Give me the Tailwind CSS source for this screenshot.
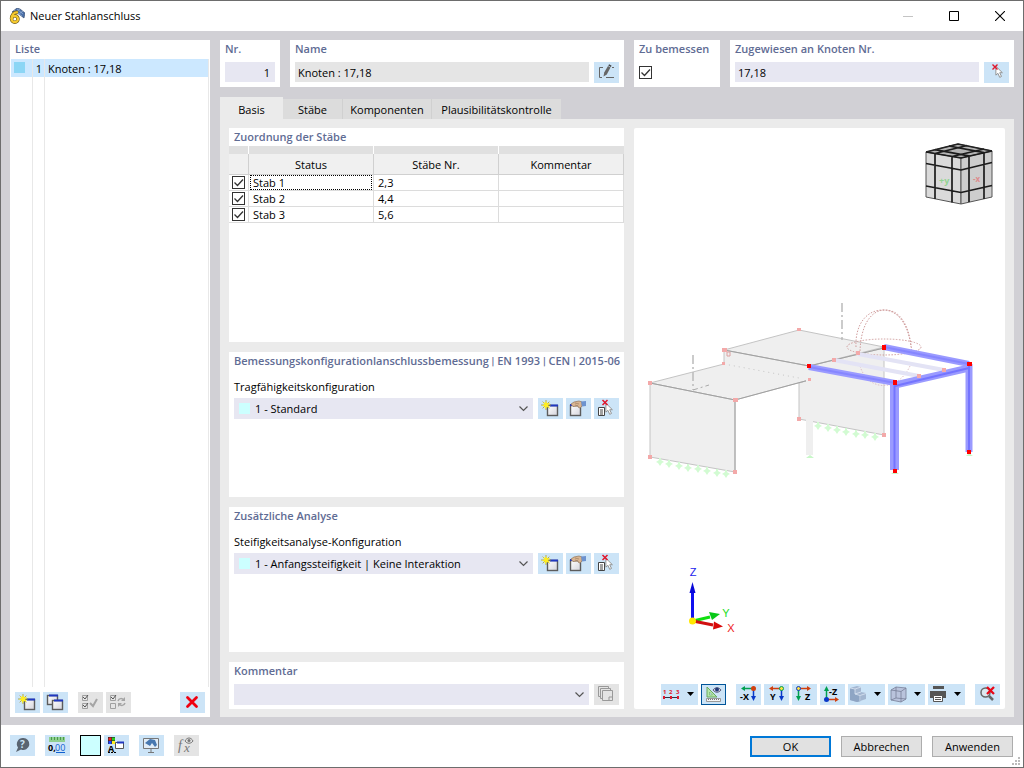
<!DOCTYPE html>
<html lang="de">
<head>
  <meta charset="UTF-8" />
  <meta name="viewport" content="width=device-width, initial-scale=1.0"/>
  <title>Neuer Stahlanschluss</title>
  <script src="https://cdn.jsdelivr.net/npm/@tailwindcss/browser@4"></script>
</head>
<body class="font-['Open_Sans','Noto_Sans',sans-serif] text-[11px] leading-4 text-black">

  <!-- shared icons -->
  <svg class="absolute size-0">
    <defs>
      <linearGradient id="win" x1="0" y1="0" x2="1" y2="1"><stop offset="0" stop-color="#fff"/><stop offset="1" stop-color="#d4d4dc"/></linearGradient>
      <symbol id="i-star" viewBox="0 0 12 12">
        <path d="M6 0v12M0 6h12M2 2l8 8M10 2l-8 8" stroke="#a89c30" stroke-width="1"/>
        <path d="M6 1l1.300 3L11 3.500 8.500 6l2 3.500L7 8.300 5 11l-.7-3.300L1 7l3-1.500L2.500 2.500l2.600 1z" fill="#ffee20"/>
      </symbol>
      <symbol id="i-new" viewBox="0 0 25 21">
        <rect x="9.500" y="7.500" width="10" height="10" fill="url(#win)" stroke="#5c5c5c" stroke-width="1.400"/>
        <path d="M12 7.500h8" stroke="#2038c0" stroke-width="2"/>
        <use href="#i-star" x="3" y="2" width="10" height="10"/>
      </symbol>
      <symbol id="i-edit" viewBox="0 0 25 21">
        <rect x="4.500" y="7.500" width="10" height="10" fill="url(#win)" stroke="#5c5c5c" stroke-width="1.400"/>
        <path d="M4 7h5" stroke="#2038c0" stroke-width="2"/>
        <path d="M5 6l3-2 5-1 3 1v4l-2 2-1.500-.5L12 8l-5 .5-1-1z" fill="#d9b591" stroke="#94755a" stroke-width=".7"/>
        <path d="M9 5l4 1M9 7l3 1" stroke="#94755a" stroke-width=".6"/>
        <path d="M15 3.500l5-.5v5l-4 .5z" fill="#6d93cf"/>
      </symbol>
      <symbol id="i-arrow" viewBox="0 0 9 15">
        <path d="M1 1v10l2.300-2 2 4.500 2-1-2-4.200h3z" fill="#fff" stroke="#8a8a8a"/>
      </symbol>
      <symbol id="i-pick" viewBox="0 0 25 21">
        <path d="M4.500 9.500h6v8h-6z" fill="#fff" stroke="#444"/><path d="M6 12h3M6 14h3M6 16h3" stroke="#444"/>
        <use href="#i-arrow" x="11" y="4" width="8" height="14"/>
        <path d="M8.500 2l5 5M13.500 2l-5 5" stroke="#e0182d" stroke-width="1.500"/>
      </symbol>
      <symbol id="i-check" viewBox="0 0 13 13">
        <path d="M2.500 6.500l3 3 5.500-6" fill="none" stroke="#333" stroke-width="1.300"/>
      </symbol>
      <symbol id="i-chev" viewBox="0 0 9 6">
        <path d="M.5 .5l4 4 4-4" fill="none" stroke="#555" stroke-width="1.200"/>
      </symbol>
      <symbol id="i-support" viewBox="0 0 8 8">
        <path d="M3 0h2v2l3 2-2 1-2 3-2-3-2-1 3-2z" fill="#d2fbd2"/>
      </symbol>
    </defs>
  </svg>

  <div class="min-h-screen flex flex-col border border-[#6d6d6d] bg-white">

    <!-- title bar -->
    <header class="h-[30px] flex items-center pl-2">
      <svg class="size-4" viewBox="0 0 16 16">
        <path d="M3 4l5-4 3 1 5 4-1 5-4-3-4-3z" fill="#4a6fa8" stroke="#2f4468" stroke-width=".6"/>
        <path d="M5 2l8 6M8 1l6 5M7 4l4-3M10 6l4-3" stroke="#a9c1e2" stroke-width=".6"/>
        <path d="M9 4.500C5 3.500 2.500 7 2.500 11" fill="none" stroke="#6c5a1a" stroke-width="3.400"/>
        <circle cx="5.800" cy="11" r="3.200" fill="none" stroke="#6c5a1a" stroke-width="3.400"/>
        <path d="M9 4.500C5 3.500 2.500 7 2.500 11" fill="none" stroke="#f5c92e" stroke-width="2.200"/>
        <circle cx="5.800" cy="11" r="3.200" fill="none" stroke="#f5c92e" stroke-width="2.200"/>
      </svg>
      <h1 class="ml-[5px] grow">Neuer Stahlanschluss</h1>
      <button class="w-[46px] h-full grid place-items-center" aria-label="Minimieren"><svg class="size-[10px]" viewBox="0 0 10 10"><path d="M0 5.500h10" stroke="#c4c4c4"/></svg></button>
      <button class="w-[46px] h-full grid place-items-center" aria-label="Maximieren"><svg class="size-[10px]" viewBox="0 0 10 10"><path d="M.5 .5h9v9h-9z" fill="none" stroke="#000"/></svg></button>
      <button class="w-[46px] h-full grid place-items-center" aria-label="Schließen"><svg class="size-[10px]" viewBox="0 0 10 10"><path d="M0 0l10 10M10 0L0 10" stroke="#000" stroke-width="1.100"/></svg></button>
    </header>

    <main class="grow flex gap-[10px] bg-[#d1d0d5] px-[9px] pt-[9px] pb-2">

      <!-- list -->
      <aside class="w-[200px] shrink-0 bg-white flex flex-col">
        <h2 class="h-[18px] leading-[18px] px-[5px] font-semibold text-[#5f6c94]">Liste</h2>
        <div class="grow mt-px ml-px mr-px grid grid-cols-[22px_12px_1fr]">
          <div class="border-r border-[#e8e8e8]"><div class="h-[18px] bg-[#cce8ff] p-[3px]"><div class="size-[11px] bg-[#8cd6f5]"></div></div></div>
          <div class="border-r border-[#e8e8e8]"><div class="h-[18px] leading-[19px] bg-[#cce8ff] text-right pr-[2px]">1</div></div>
          <div class="border-r border-[#e8e8e8]"><div class="h-[18px] leading-[19px] bg-[#cce8ff] pl-[3px]">Knoten : 17,18</div></div>
        </div>
        <div class="flex gap-[3px] px-[5px] pt-[5px] pb-1">
          <button class="w-[25px] h-[21px] bg-[#cce4f7]" aria-label="Neu"><svg viewBox="0 0 25 21"><use href="#i-new"/></svg></button>
          <button class="w-[25px] h-[21px] bg-[#cce4f7]" aria-label="Kopieren"><svg viewBox="0 0 25 21">
            <rect x="4.500" y="3.500" width="10" height="9" fill="url(#win)" stroke="#5c5c5c" stroke-width="1.400"/><path d="M6 3.500h9" stroke="#2038c0" stroke-width="2"/>
            <rect x="9.500" y="8.500" width="10" height="9" fill="url(#win)" stroke="#5c5c5c" stroke-width="1.400"/><path d="M11 8.500h9" stroke="#2038c0" stroke-width="2"/></svg></button>
          <button class="w-[25px] h-[21px] bg-[#e4e4e4] ml-[7px]" aria-label="Alle auswählen"><svg viewBox="0 0 25 21" fill="none">
            <path d="M4.500 3.500h5v5h-5zM4.500 11.500h5v5h-5z" stroke="#a0a0a0"/><path d="M5 5l2 2 3-4M5 13l2 2 3-4" stroke="#555"/><path d="M12 11l3 3 4-7" stroke="#a5a5a5" stroke-width="2"/></svg></button>
          <button class="w-[25px] h-[21px] bg-[#e4e4e4]" aria-label="Auswahl umkehren"><svg viewBox="0 0 25 21" fill="none">
            <path d="M4.500 3.500h5v5h-5zM4.500 11.500h5v5h-5z" stroke="#a0a0a0"/><path d="M5 5l2 2 3-4" stroke="#555"/><path d="M12 9c1-3 4-3 6-1M19 11c-1 3-4 3-6 1" stroke="#a5a5a5" stroke-width="1.500"/><path d="M19 5v4h-4zM12 15v-4h4z" fill="#a5a5a5"/></svg></button>
          <button class="w-[25px] h-[21px] bg-[#cce4f7] ml-auto" aria-label="Löschen"><svg viewBox="0 0 25 21"><path d="M7.500 5.500l9 9M16.500 5.500l-9 9" stroke="#f00010" stroke-width="2.800" stroke-linecap="round"/></svg></button>
        </div>
      </aside>

      <div class="grow min-w-0 flex flex-col">

        <!-- header fields -->
        <div class="grid grid-cols-[60px_334fr_86px_284fr] gap-[10px]">
          <section class="bg-white px-[5px] pb-1">
            <label for="nr" class="block h-[18px] leading-[18px] font-semibold text-[#5f6c94]">Nr.</label>
            <div class="mt-1 h-[21px]"><input id="nr" value="1" class="w-full h-5 bg-[#e7e7f2] text-right px-[5px] pt-px" /></div>
          </section>
          <section class="bg-white px-[5px] pb-1">
            <label for="name" class="block h-[18px] leading-[18px] font-semibold text-[#5f6c94]">Name</label>
            <div class="mt-1 flex gap-[5px]">
              <input id="name" value="Knoten : 17,18" readonly class="grow min-w-0 h-5 bg-[#e5e5e5] px-[3px] pt-px" />
              <button class="w-[25px] h-[21px] bg-[#cce4f7]" aria-label="Name bearbeiten"><svg viewBox="0 0 25 21" fill="none">
                <path d="M9 5.500H5.500v10H8M12 15.500h8M18 5.500h2" stroke="#666"/><path d="M9.500 14.500l.7-4L14 4l2.500 1.500-3.700 7z" fill="#666"/><path d="M14.300 3.500l.8-1.300 2.500 1.500-.8 1.300z" fill="#444"/></svg></button>
            </div>
          </section>
          <section class="bg-white px-[5px] pb-1">
            <label for="design" class="block h-[18px] leading-[18px] font-semibold text-[#5f6c94] whitespace-nowrap">Zu bemessen</label>
            <div class="mt-1 h-[21px] grid justify-start items-center">
              <input id="design" type="checkbox" checked class="appearance-none size-[13px] border border-[#333] bg-white [grid-area:1/1]" />
              <svg class="size-[13px] [grid-area:1/1] pointer-events-none"><use href="#i-check"/></svg>
            </div>
          </section>
          <section class="bg-white px-[5px] pb-1">
            <label for="nodes" class="block h-[18px] leading-[18px] font-semibold text-[#5f6c94]">Zugewiesen an Knoten Nr.</label>
            <div class="mt-1 flex gap-[5px]">
              <input id="nodes" value="17,18" class="grow min-w-0 h-5 bg-[#e7e7f2] px-[3px] pt-px" />
              <button class="w-[25px] h-[21px] bg-[#cce4f7]" aria-label="Knoten auswählen"><svg viewBox="0 0 25 21">
                <use href="#i-arrow" x="11" y="3" width="8" height="14"/><path d="M8.500 2.500l5 5M13.500 2.500l-5 5" stroke="#e0182d" stroke-width="1.400"/></svg></button>
            </div>
          </section>
        </div>

        <!-- tabs -->
        <nav class="mt-[10px] h-[22px] flex items-end" role="tablist">
          <button role="tab" aria-selected="true" class="w-[63px] h-[22px] pt-1 bg-[#ebebeb]">Basis</button>
          <button role="tab" class="w-[60px] h-5 pt-px bg-[#dcdcdc] border-r border-[#d0d0d0]">Stäbe</button>
          <button role="tab" class="w-[89px] h-5 pt-px bg-[#dcdcdc] border-r border-[#d0d0d0]">Komponenten</button>
          <button role="tab" class="w-[129px] h-5 pt-px bg-[#dcdcdc]">Plausibilitätskontrolle</button>
        </nav>

        <div class="grow grid grid-cols-[395fr_371fr] gap-[10px] bg-[#ebebeb] px-[9px] pt-[9px] pb-2">

          <div class="min-w-0 grid grid-cols-1 grid-rows-[214fr_145fr_145fr_auto] gap-[10px]">

            <section class="bg-white">
              <h2 class="h-[18px] leading-[18px] px-[5px] font-semibold text-[#5f6c94]">Zuordnung der Stäbe</h2>
              <table class="w-full table-fixed border-separate border-spacing-0">
                <colgroup><col class="w-5" /><col /><col /><col /></colgroup>
                <thead>
                  <tr class="h-2 bg-[#e0e0e0]">
                    <td class="p-0 border-r border-white"></td><td class="p-0 border-r border-white"></td><td class="p-0 border-r border-white"></td><td class="p-0"></td>
                  </tr>
                  <tr class="h-[21px] bg-[#f0f0f0]">
                    <th class="p-0 border-r border-b border-[#d0d0d0]"></th>
                    <th class="p-0 pt-[2px] border-r border-b border-[#d0d0d0] font-normal">Status</th>
                    <th class="p-0 pt-[2px] border-r border-b border-[#d0d0d0] font-normal">Stäbe Nr.</th>
                    <th class="p-0 pt-[2px] border-r border-b border-[#d0d0d0] font-normal">Kommentar</th>
                  </tr>
                </thead>
                <tbody>
                  <tr>
                    <td class="p-0 border-r border-b border-[#dcdcdc]"><div class="grid justify-center"><input type="checkbox" checked aria-label="Stab 1" class="appearance-none size-[13px] border border-[#333] [grid-area:1/1]" /><svg class="size-[13px] [grid-area:1/1] pointer-events-none"><use href="#i-check"/></svg></div></td>
                    <td class="p-0 border-r border-b border-[#dcdcdc]"><div class="h-[15px] leading-[13px] mx-px pl-[2px] border border-dotted border-black">Stab 1</div></td>
                    <td class="p-0 pl-1 leading-[15px] border-r border-b border-[#dcdcdc]">2,3</td>
                    <td class="p-0 border-r border-b border-[#dcdcdc]"></td>
                  </tr>
                  <tr>
                    <td class="p-0 border-r border-b border-[#dcdcdc]"><div class="grid justify-center"><input type="checkbox" checked aria-label="Stab 2" class="appearance-none size-[13px] border border-[#333] [grid-area:1/1]" /><svg class="size-[13px] [grid-area:1/1] pointer-events-none"><use href="#i-check"/></svg></div></td>
                    <td class="p-0 pl-1 leading-[15px] border-r border-b border-[#dcdcdc]">Stab 2</td>
                    <td class="p-0 pl-1 leading-[15px] border-r border-b border-[#dcdcdc]">4,4</td>
                    <td class="p-0 border-r border-b border-[#dcdcdc]"></td>
                  </tr>
                  <tr>
                    <td class="p-0 border-r border-b border-[#dcdcdc]"><div class="grid justify-center"><input type="checkbox" checked aria-label="Stab 3" class="appearance-none size-[13px] border border-[#333] [grid-area:1/1]" /><svg class="size-[13px] [grid-area:1/1] pointer-events-none"><use href="#i-check"/></svg></div></td>
                    <td class="p-0 pl-1 leading-[15px] border-r border-b border-[#dcdcdc]">Stab 3</td>
                    <td class="p-0 pl-1 leading-[15px] border-r border-b border-[#dcdcdc]">5,6</td>
                    <td class="p-0 border-r border-b border-[#dcdcdc]"></td>
                  </tr>
                </tbody>
              </table>
            </section>

            <section class="bg-white px-[5px]">
              <h2 class="h-[18px] leading-[18px] font-semibold text-[#5f6c94] whitespace-nowrap">Bemessungskonfigurationlanschlussbemessung <span class="font-[Roboto]">|</span> EN 1993 <span class="font-[Roboto]">|</span> CEN <span class="font-[Roboto]">|</span> 2015-06</h2>
              <label for="uls" class="block mt-2 mb-[2px] leading-[18px]">Tragfähigkeitskonfiguration</label>
              <div class="flex gap-[3px]">
                <div class="relative grow mr-[2px] flex items-center bg-[#e7e7f2] pl-[5px]">
                  <span class="size-[11px] bg-[#ccffff]"></span>
                  <select id="uls" class="appearance-none grow h-[21px] pl-[5px] outline-none"><option>1 - Standard</option></select>
                  <svg class="absolute right-[5px] w-[9px] h-[6px] pointer-events-none"><use href="#i-chev"/></svg>
                </div>
                <button class="w-[25px] h-[21px] bg-[#cce4f7]" aria-label="Neu"><svg viewBox="0 0 25 21"><use href="#i-new"/></svg></button>
                <button class="w-[25px] h-[21px] bg-[#cce4f7]" aria-label="Bearbeiten"><svg viewBox="0 0 25 21"><use href="#i-edit"/></svg></button>
                <button class="w-[25px] h-[21px] bg-[#cce4f7]" aria-label="Zuweisen"><svg viewBox="0 0 25 21"><use href="#i-pick"/></svg></button>
              </div>
            </section>

            <section class="bg-white px-[5px]">
              <h2 class="h-[18px] leading-[18px] font-semibold text-[#5f6c94]">Zusätzliche Analyse</h2>
              <label for="stiff" class="block mt-2 mb-[2px] leading-[18px]">Steifigkeitsanalyse-Konfiguration</label>
              <div class="flex gap-[3px]">
                <div class="relative grow mr-[2px] flex items-center bg-[#e7e7f2] pl-[5px]">
                  <span class="size-[11px] bg-[#ccffff]"></span>
                  <select id="stiff" class="appearance-none grow h-[21px] pl-[5px] outline-none"><option>1 - Anfangssteifigkeit | Keine Interaktion</option></select>
                  <svg class="absolute right-[5px] w-[9px] h-[6px] pointer-events-none"><use href="#i-chev"/></svg>
                </div>
                <button class="w-[25px] h-[21px] bg-[#cce4f7]" aria-label="Neu"><svg viewBox="0 0 25 21"><use href="#i-new"/></svg></button>
                <button class="w-[25px] h-[21px] bg-[#cce4f7]" aria-label="Bearbeiten"><svg viewBox="0 0 25 21"><use href="#i-edit"/></svg></button>
                <button class="w-[25px] h-[21px] bg-[#cce4f7]" aria-label="Zuweisen"><svg viewBox="0 0 25 21"><use href="#i-pick"/></svg></button>
              </div>
            </section>

            <section class="bg-white px-[5px] pb-1">
              <label for="comment" class="block h-[18px] leading-[18px] font-semibold text-[#5f6c94]">Kommentar</label>
              <div class="mt-1 flex gap-[5px]">
                <div class="relative grow flex items-center bg-[#e7e7f2]">
                  <select id="comment" class="appearance-none grow h-[21px] pl-[5px] outline-none"><option></option></select>
                  <svg class="absolute right-[5px] w-[9px] h-[6px] pointer-events-none"><use href="#i-chev"/></svg>
                </div>
                <button class="w-[25px] h-[21px] bg-[#e4e4e4]" aria-label="Kommentar übernehmen"><svg viewBox="0 0 25 21" fill="none" stroke="#999">
                  <path d="M6 12.500H4.500v-10h10V4M8 14.500H6.500v-10h10V6"/><path d="M8.500 6.500h10v10h-10zM15 16v-3h3"/></svg></button>
              </div>
            </section>
          </div>

          <!-- 3D view -->
          <section class="min-w-0 bg-white flex flex-col rounded-[2px]">
            <svg class="w-full h-0 grow" viewBox="634 128 371 556">
              <!-- navigation cube -->
              <g stroke="#555" stroke-linejoin="round">
                <path d="M926 152l32-8 34 7-31 7z" fill="#b4b4b4"/>
                <path d="M926 152l35 6v46l-35-7z" fill="#dadada"/>
                <path d="M961 158l31-7v46l-31 7z" fill="#cdcdcd"/>
                <path d="M935 153.500V199M952 156.500v46M969 156v46M984 153v46M926 163.500l35 6.500 31-7.500M926 186l35 6.500 31-7M935 149.700l35 6.500M949 146l35 6.700M935 153.500l32-8M952 156.500l32-7.500M926 152l35 6 31-7" fill="none" stroke="#1c1c1c" stroke-width="1.700"/>
                <path d="M926 152l32-8 34 7" fill="none" stroke="#222" stroke-width="1.500"/>
              </g>
              <text x="939" y="184" font-size="9" font-weight="700" fill="#93d493">+y</text>
              <text x="973" y="182" font-size="8" font-weight="700" fill="#dd8d8d">-x</text>

              <!-- slabs and walls -->
              <g fill="#efefef" stroke="#c4c4c4">
                <path d="M799 383l10-3v-14l75-18v87l-85-16z"/>
                <path d="M724 350l75-20 85 17-75 19z"/>
                <path d="M724 350l85 16v14l-74 20-85-17 74-19z"/>
                <path d="M650 383l85 17v72l-85-15z"/>
                <path d="M735 400v72M724 350l85 16M650 383l85 17 74-20M809 366l75-18" fill="none" stroke="#a0a0a0"/>
              </g>
              <path d="M724 364l75 14" stroke="#c5c5c5" stroke-dasharray="1 4"/>
              <path d="M806 370h7v85h-7z" fill="#efefef"/>
              <path d="M693 355v35M842 303v37" stroke="#bbb" stroke-width="1.500" stroke-dasharray="9 3 2 3"/>
              <path d="M693 390l16-5" stroke="#aaa" stroke-dasharray="5 3 2 3"/>
              <path d="M727 352h3v4h-3z" fill="none" stroke="#dca0a0"/>

              <!-- line supports -->
              <g>
                <use href="#i-support" x="656" y="458" width="8" height="8"/><use href="#i-support" x="665" y="460" width="8" height="8"/>
                <use href="#i-support" x="675" y="462" width="8" height="8"/><use href="#i-support" x="684" y="464" width="8" height="8"/>
                <use href="#i-support" x="694" y="465" width="8" height="8"/><use href="#i-support" x="703" y="467" width="8" height="8"/>
                <use href="#i-support" x="713" y="469" width="8" height="8"/><use href="#i-support" x="722" y="470" width="8" height="8"/>
                <use href="#i-support" x="814" y="422" width="8" height="8"/><use href="#i-support" x="824" y="424" width="8" height="8"/>
                <use href="#i-support" x="833" y="426" width="8" height="8"/><use href="#i-support" x="842" y="428" width="8" height="8"/>
                <use href="#i-support" x="852" y="430" width="8" height="8"/><use href="#i-support" x="861" y="431" width="8" height="8"/>
                <use href="#i-support" x="871" y="433" width="8" height="8"/>
              </g>
              <path d="M806 458l4-3 4 3zM891 474l4-3 4 3zM966 456l3-3 4 3z" fill="#c8f7c8"/>

              <!-- result circles -->
              <g fill="none" stroke="#d09c9c" stroke-dasharray="1.500 1.500">
                <ellipse cx="884" cy="347" rx="37" ry="8"/>
                <path d="M856 347c-1-22 10-37 27-37s27 18 29 44"/>
                <path d="M860 354c0-27 10-44 25-44s24 15 26 37"/>
                <path d="M860 366c8 26 38 26 50 0" stroke="#dfc0c8"/>
              </g>

              <!-- secondary beams -->
              <path d="M858 354l86 16M834 360l85 16" stroke="#e3e3f5" stroke-width="4"/>

              <!-- selected frame -->
              <g fill="none" stroke="#9a9aff">
                <path d="M895 385l74-17" stroke-width="7"/>
                <path d="M884 347l85 17M809 367l86 16" stroke-width="6"/>
                <path d="M894.500 384v86" stroke-width="9"/>
                <path d="M969 364v88" stroke-width="7"/>
                <path d="M895 386l74-18M894.500 384v86M969 364v88" stroke="#7474ff" stroke-width="2"/>
                <path d="M884 347l85 17M809 367l86 16" stroke="#8686ff" stroke-width="2"/>
              </g>

              <g fill="#f3a9a9">
                <path d="M648 381h4v4h-4zM733 398h5v4h-5zM648 455h4v4h-4zM733 470h4v4h-4zM722 348h5v4h-5zM797 328h4v3h-4zM722 362h3v3h-3zM808 378h3v3h-3zM797 417h4v4h-4zM882 433h4v4h-4z"/>
                <path d="M856 351h4v4h-4zM832 358h4v4h-4zM942 368h4v4h-4zM917 374h4v4h-4z"/>
              </g>
              <path d="M807 364h4v4h-4zM882 345h4v5h-4zM967 362h5v4h-5zM893 380h4v5h-4zM893 469h4v4h-4zM967 450h4v4h-4z" fill="#f00"/>

              <!-- axes -->
              <path d="M692.500 621v-32" stroke="#1010f0" stroke-width="3"/><path d="M692.500 582l3 11h-6z" fill="#0808d8"/>
              <path d="M693 621l17-4" stroke="#10e010" stroke-width="3"/><path d="M720 614l-11-2 3 8z" fill="#08c818"/>
              <path d="M693 621l20 4" stroke="#d01010" stroke-width="3"/><path d="M723 626.500l-9-5-1 8z" fill="#d80808"/>
              <circle cx="692.500" cy="621" r="3.500" fill="#ffe800"/>
              <g font-size="11" text-anchor="middle" class="font-['Liberation_Sans',sans-serif]">
                <text x="693" y="576" fill="#2222ee">Z</text>
                <text x="726" y="617" fill="#22dd22">Y</text>
                <text x="731" y="632" fill="#ee2222">X</text>
              </g>
            </svg>

            <div class="flex gap-[3px] pl-[27px] pr-[5px] pb-[4px]">
              <button class="w-[37px] h-[21px] bg-[#cce4f7]" aria-label="Nummerierung"><svg viewBox="0 0 37 21">
                <g font-size="6" font-weight="700" fill="#e0182d"><text x="2" y="10">1</text><text x="8" y="10">2</text><text x="15" y="10">3</text></g>
                <path d="M3 13.500h15" stroke="#334"/><path d="M2 12h2v3H2zM9 12h2v3H9zM16 12h2v3h-2z" fill="#e0182d"/><path d="M26 8h7l-3.500 4z"/></svg></button>
              <button class="w-[25px] h-[21px] bg-[#cce4f7] border border-[#005499]" aria-label="Anzeige"><svg viewBox="1 1 23 19">
                <path d="M6 3v10h10z" fill="#b5e8a8" stroke="#6aa860"/><path d="M8.500 8v3h3z" fill="#cce4f7" stroke="#6aa860" stroke-width=".6"/>
                <path d="M5.500 14.500h14v3h-14z" fill="#f5f5f5" stroke="#999"/><path d="M7.500 15v1M9.500 15v1M11.500 15v1M13.500 15v1M15.500 15v1M17.500 15v1" stroke="#777"/>
                <path d="M12 6c2-3 6-3 8 0-2 3-6 3-8 0z" fill="#ccd" stroke="#446" stroke-width=".8"/><circle cx="16" cy="5.500" r="2" fill="#223a78"/></svg></button>
              <button class="w-[25px] h-[21px] bg-[#cce4f7] ml-[7px]" aria-label="Ansicht -X"><svg viewBox="0 0 25 21">
                <path d="M17 4.500H8" stroke="#00a050" stroke-width="1.500"/><path d="M5 4.500l4-2.500v5z" fill="#00a050"/><path d="M17.500 5v8" stroke="#0838c8" stroke-width="1.500"/><path d="M17.500 17l-2.500-5h5z" fill="#0838c8"/><circle cx="17.500" cy="4.500" r="2.500" fill="#d04010"/>
                <text x="4" y="16" font-size="9" font-weight="700">-X</text></svg></button>
              <button class="w-[25px] h-[21px] bg-[#cce4f7]" aria-label="Ansicht Y"><svg viewBox="0 0 25 21">
                <path d="M17 4.500H8" stroke="#d04010" stroke-width="1.500"/><path d="M5 4.500l4-2.500v5z" fill="#d04010"/><path d="M17.500 5v8" stroke="#0838c8" stroke-width="1.500"/><path d="M17.500 17l-2.500-5h5z" fill="#0838c8"/><circle cx="17.500" cy="4.500" r="2" fill="#ffe040" stroke="#00a050"/>
                <text x="6" y="16" font-size="9" font-weight="700">Y</text></svg></button>
              <button class="w-[25px] h-[21px] bg-[#cce4f7]" aria-label="Ansicht Z"><svg viewBox="0 0 25 21">
                <path d="M7 4.500h9" stroke="#d04010" stroke-width="1.500"/><path d="M19 4.500L15 2v5z" fill="#d04010"/><path d="M6.500 5v8" stroke="#00a050" stroke-width="1.500"/><path d="M6.500 17L4 12h5z" fill="#00a050"/><circle cx="6.500" cy="4.500" r="2" fill="#ffe040" stroke="#0838c8"/>
                <text x="13" y="16" font-size="9" font-weight="700">Z</text></svg></button>
              <button class="w-[25px] h-[21px] bg-[#cce4f7]" aria-label="Ansicht -Z"><svg viewBox="0 0 25 21">
                <path d="M7 15.500h9" stroke="#d04010" stroke-width="1.500"/><path d="M19 15.500L15 13v5z" fill="#d04010"/><path d="M6.500 14V6" stroke="#00a050" stroke-width="1.500"/><path d="M6.500 2L4 7h5z" fill="#00a050"/><circle cx="6.500" cy="15.500" r="2.500" fill="#0838c8"/>
                <text x="9" y="11" font-size="9" font-weight="700">-Z</text></svg></button>
              <button class="w-[37px] h-[21px] bg-[#cce4f7]" aria-label="Darstellung"><svg viewBox="0 0 37 21">
                <path d="M2 4l7-2 4 1v5l5 1v6l-9 3-7-2z" fill="#a3b6d0"/><path d="M2 4l5 1v5l6 1v6l-4 1-7-2z" fill="#8ea5c4"/><path d="M2 4l5 1 6-2M7 5v5l6-2M7 10l5 1.500 6-2M12 11.500V17" fill="none" stroke="#dbe5f2" stroke-width=".8"/><path d="M26 8h7l-3.500 4z"/></svg></button>
              <button class="w-[37px] h-[21px] bg-[#cce4f7]" aria-label="Körper"><svg viewBox="0 0 37 21">
                <path d="M3 6l5-3 10 1v11l-5 3-10-2z" fill="#b9c3dc" stroke="#777f98" stroke-width=".8"/><path d="M3 6l10 1.500L18 4M13 7.500V18M8 3v11l10 1M8 14l-5 2" fill="none" stroke="#777f98" stroke-width=".8"/><path d="M26 8h7l-3.500 4z"/></svg></button>
              <button class="w-[37px] h-[21px] bg-[#cce4f7]" aria-label="Drucken"><svg viewBox="0 0 37 21">
                <path d="M5 2h11v3H5zM2 7h16v7H2z" fill="#555"/><path d="M5.500 11.500h9v6h-9z" fill="#fff" stroke="#555"/><path d="M7 13.500h6M7 15.500h6" stroke="#555"/><path d="M26 8h7l-3.500 4z"/></svg></button>
              <button class="w-[25px] h-[21px] bg-[#cce4f7] ml-auto" aria-label="Zoom zurücksetzen"><svg viewBox="0 0 25 21">
                <circle cx="10.500" cy="8.500" r="4.500" fill="#dde8f0" stroke="#666" stroke-width="1.500"/><path d="M14 12l4 4" stroke="#666" stroke-width="2.500"/><path d="M12 3l7 7M19 3l-7 7" stroke="#e80818" stroke-width="2.300"/></svg></button>
            </div>
          </section>
        </div>
      </div>
    </main>

    <!-- footer -->
    <footer class="relative h-[42px] flex items-start gap-[10px] pl-[9px] pr-[10px] pt-[10px]">
      <button class="w-[25px] h-[21px] bg-[#cce4f7]" aria-label="Hilfe"><svg viewBox="0 0 25 21">
        <path d="M13 3a6 6 0 1 1-2 11.500L6 17l2-4.500A6 6 0 0 1 13 3z" fill="#5a6470"/><text x="10" y="13" font-size="10" font-weight="700" fill="#cce4f7">?</text></svg></button>
      <button class="w-[25px] h-[21px] bg-[#cce4f7]" aria-label="Einheiten"><svg viewBox="0 0 25 21">
        <path d="M4 2h16v5H4z" fill="#8fd08f"/><path d="M6.500 2v3M9.500 2v3M12.500 2v3M15.500 2v3M18.500 2v3" stroke="#4a9a4a"/>
        <text x="3" y="16" font-size="9" font-weight="700">0,</text><text x="10" y="16" font-size="9" fill="#1060d0">00</text><path d="M11 17.500h9" stroke="#1060d0"/></svg></button>
      <div class="flex gap-[3px]">
        <button class="size-[21px] bg-[#ccffff] border border-black" aria-label="Farbe"></button>
        <button class="w-[25px] h-[21px] bg-[#cce4f7]" aria-label="Anzeigeeigenschaften"><svg viewBox="0 0 25 21">
          <path d="M4 2h7v7H4z" fill="#222"/><path d="M4.500 2.500h3v3h-3z" fill="#e22"/><path d="M8 2.500h3v3H8z" fill="#2c2"/><path d="M4.500 6h3v3h-3z" fill="#24f"/><path d="M8 6h3v3H8z" fill="#fe2"/>
          <text x="4" y="17" font-size="9" font-weight="700">A</text><path d="M4 17.500h8" stroke="#000" stroke-dasharray="2 1"/><path d="M11.500 7.500h8v6h-8z" fill="#fff" stroke="#555"/><path d="M13 7.500h7" stroke="#2038c0" stroke-width="2"/></svg></button>
      </div>
      <button class="w-[25px] h-[21px] bg-[#cce4f7]" aria-label="Darstellung"><svg viewBox="0 0 25 21">
        <path d="M4.500 3.500h15v10h-15z" fill="#e2edf7" stroke="#777"/><path d="M12 14v3M9 17.500h6" stroke="#777"/><path d="M6 8l5-4 5 1 2 5-2 2-3-4-2 3z" fill="#4878b0"/></svg></button>
      <button class="w-[25px] h-[21px] bg-[#e4e4e4]" aria-label="Formel"><svg viewBox="0 0 25 21" fill="#777">
        <text x="4" y="15" font-size="14" font-style="italic" class="font-['Liberation_Serif',serif]">f</text><text x="10" y="17" font-size="13" font-style="italic" class="font-['Liberation_Serif',serif]">x</text>
        <path d="M11 6c2-4 6-4 8 0-2 3-6 3-8 0z" fill="none" stroke="#777"/><circle cx="15" cy="5.500" r="1.500"/></svg></button>
      <div class="ml-auto flex gap-[10px] pt-px">
        <button class="w-[81px] h-[21px] bg-[#e1e1e1] border-2 border-[#0078d7]">OK</button>
        <button class="w-[81px] h-[21px] bg-[#e1e1e1] border border-[#adadad]">Abbrechen</button>
        <button class="w-[81px] h-[21px] bg-[#e1e1e1] border border-[#adadad]">Anwenden</button>
      </div>
      <svg class="absolute right-[3px] bottom-[2px] size-2" viewBox="0 0 8 8"><path d="M6 0h2v2H6zM3 3h2v2H3zM6 3h2v2H6zM0 6h2v2H0zM3 6h2v2H3zM6 6h2v2H6z" fill="#bbb"/></svg>
    </footer>
  </div>
</body>
</html>
